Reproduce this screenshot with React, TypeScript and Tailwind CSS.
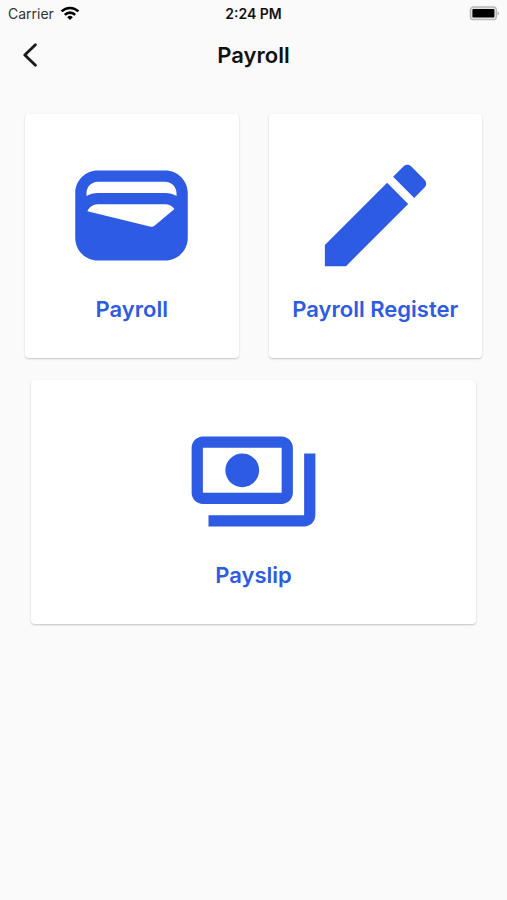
import type { ReactNode } from "react";

const Icon = ({ children }: { children: ReactNode }) => (
  <svg className="w-[135px] h-[135px]" viewBox="0 0 24 24" fill="currentColor" aria-hidden="true">
    {children}
  </svg>
);

const ITEMS = [
  {
    href: "#payroll",
    title: "Payroll",
    wide: false,
    icon: (
      <path d="M18 4H6C3.79 4 2 5.79 2 8v8c0 2.21 1.79 4 4 4h12c2.21 0 4-1.79 4-4V8c0-2.21-1.79-4-4-4zm-1.86 9.77c-.24.2-.57.28-.88.2L4.15 11.25C4.45 10.52 5.16 10 6 10h12c.67 0 1.26.34 1.63.84l-3.49 2.93zM6 6h12c1.1 0 2 .9 2 2v.55c-.59-.34-1.27-.55-2-.55H6c-.73 0-1.41.21-2 .55V8c0-1.1.9-2 2-2z" />
    ),
  },
  {
    href: "#register",
    title: "Payroll Register",
    wide: false,
    icon: (
      <path d="M3 17.25V21h3.75L17.81 9.94l-3.75-3.75L3 17.25zM20.71 7.04c.39-.39.39-1.02 0-1.41l-2.34-2.34c-.39-.39-1.02-.39-1.41 0l-1.83 1.83 3.75 3.75 1.83-1.83z" />
    ),
  },
  {
    href: "#payslip",
    title: "Payslip",
    wide: true,
    icon: (
      <path d="M19 14V6c0-1.1-.9-2-2-2H3c-1.1 0-2 .9-2 2v8c0 1.1.9 2 2 2h14c1.1 0 2-.9 2-2zm-2 0H3V6h14v8zm-7-7c-1.66 0-3 1.34-3 3s1.34 3 3 3 3-1.34 3-3-1.34-3-3-3zm13 0v11c0 1.1-.9 2-2 2H4v-2h17V7h2z" />
    ),
  },
];

export default function App() {
  return (
    <main className="min-h-screen flex flex-col bg-[#fafafa] font-['Inter',sans-serif] text-[#111111]">

      {/* STATUS BAR */}
      <div className="grid grid-cols-3 items-center h-7 px-2 text-sm">
        <div className="flex items-center gap-1.5 text-[#333333]">
          Carrier
          <svg className="w-5 h-4" viewBox="0 0 20 16" fill="none" stroke="#000" strokeWidth="2.6" aria-label="Wi-Fi">
            <path d="M1.6 5.4a12 12 0 0 1 16.8 0" />
            <path d="M4.8 8.8a7.4 7.4 0 0 1 10.4 0" />
            <path d="M10 14 7.2 11.2a4 4 0 0 1 5.6 0z" fill="#000" stroke="none" />
          </svg>
        </div>
        <span className="text-center font-semibold">2:24 PM</span>
        <svg className="w-[30px] h-4 justify-self-end" viewBox="1 0 30 16" aria-label="Battery full">
          <rect x="2.4" y="1" width="26" height="12.6" rx="3.2" fill="#e4e4e4" stroke="#b8b8b8" strokeWidth="1.4" />
          <rect x="4.4" y="3" width="22" height="8.6" rx="1" fill="#000" />
          <path d="M29.6 5.2c1.8.6 1.8 3.8 0 4.4z" fill="#b0b0b0" />
        </svg>
      </div>

      {/* HEADER */}
      <header className="grid grid-cols-[40px_1fr_40px] items-center h-[54px] px-3">
        <button type="button" aria-label="Back" className="flex items-center justify-center w-9 h-10">
          <svg className="w-4 h-6" viewBox="0 0 16 24" fill="none" stroke="#1a1a1a" strokeWidth="2.8" strokeLinecap="round" strokeLinejoin="round">
            <path d="M13.4 1.8 2.8 12l10.6 10.2" />
          </svg>
        </button>
        <h1 className="text-center text-[22px] leading-7 font-semibold">Payroll</h1>
      </header>

      {/* CARDS */}
      <nav className="grid grid-cols-2 gap-x-[30px] gap-y-[22px] px-[25px] pt-8 pb-8">
        {ITEMS.map((item) => (
          <a
            key={item.href}
            href={item.href}
            className={`flex flex-col items-center gap-3 h-[244px] pt-[34px] rounded bg-white text-[#2d5be3] shadow-[0_1px_2px_rgba(0,0,0,0.22)] ${item.wide ? "col-span-2 mx-1.5" : ""}`}
          >
            <Icon>{item.icon}</Icon>
            <span className="text-[22px] leading-7 font-semibold">{item.title}</span>
          </a>
        ))}
      </nav>
    </main>
  );
}
